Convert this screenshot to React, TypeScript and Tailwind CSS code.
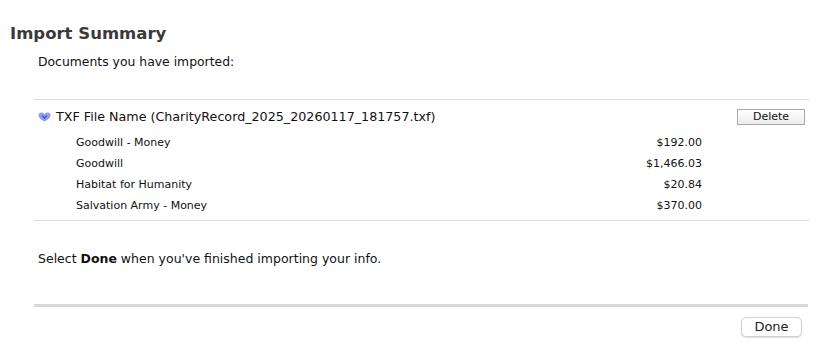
const items = [
  { name: 'Goodwill - Money', amount: '$192.00' },
  { name: 'Goodwill', amount: '$1,466.03' },
  { name: 'Habitat for Humanity', amount: '$20.84' },
  { name: 'Salvation Army - Money', amount: '$370.00' },
];

function Disclosure() {
  return (
    <svg width="13" height="10" viewBox="0 0 13 10" className="shrink-0">
      <path
        d="M6.5 9.5 C4 8 0.5 6 0.5 3.2 C0.5 1.5 1.8 0.5 3.3 0.5 C4.6 0.5 5.6 1.2 6.5 2 C7.4 1.2 8.4 0.5 9.7 0.5 C11.2 0.5 12.5 1.5 12.5 3.2 C12.5 6 9 8 6.5 9.5 Z"
        fill="#8f9cf0"
      />
      <path d="M4.2 3.8 L6.5 6 L8.8 3.8" stroke="#3d4fc4" strokeWidth="1.3" fill="none" />
    </svg>
  );
}

export default function App() {
  return (
    <div className="w-[831px] h-[357px] bg-white text-[#111] font-['DejaVu_Sans',sans-serif] overflow-hidden">
      <h1 className="pl-[10px] pt-[23px] text-[16.5px] font-bold leading-[22px] text-[#3a3a3a]">
        Import Summary
      </h1>
      <p className="pl-[38px] pt-[9px] text-[12.4px] leading-[16px]">Documents you have imported:</p>

      <div className="ml-[34px] w-[775px] mt-[29px] border-t border-[#dcdcdc]">
        <div className="flex items-center h-[33px] pl-[4px] pr-[4px]">
          <Disclosure />
          <span className="ml-[5px] text-[12.7px]">TXF File Name (CharityRecord_2025_20260117_181757.txf)</span>
          <button className="ml-auto w-[68px] h-[16px] border border-[#a9a9a9] bg-gradient-to-b from-white to-[#ececec] text-[11px] leading-[14px] text-[#111]">
            Delete
          </button>
        </div>
        <div className="pb-[3px]">
          {items.map((it) => (
            <div key={it.name} className="flex items-center h-[21px] text-[11px]">
              <span className="pl-[42px]">{it.name}</span>
              <span className="ml-auto mr-[107px]">{it.amount}</span>
            </div>
          ))}
        </div>
      </div>
      <div className="ml-[34px] w-[775px] border-t border-[#dcdcdc]" />

      <p className="pl-[38px] pt-[30px] text-[12.5px] leading-[16px]">
        Select <strong className="font-bold">Done</strong> when you've finished importing your info.
      </p>

      <div className="ml-[34px] w-[774px] mt-[37px] h-[3px] bg-[#d9d9d9]" />
      <div className="flex justify-end pr-[29px] pt-[10px]">
        <button className="w-[61px] h-[20px] rounded-[5px] border border-[#d0d0d0] bg-white shadow-[0_1px_1px_rgba(0,0,0,0.12)] text-[13px] leading-[18px] text-[#222]">
          Done
        </button>
      </div>
    </div>
  );
}
